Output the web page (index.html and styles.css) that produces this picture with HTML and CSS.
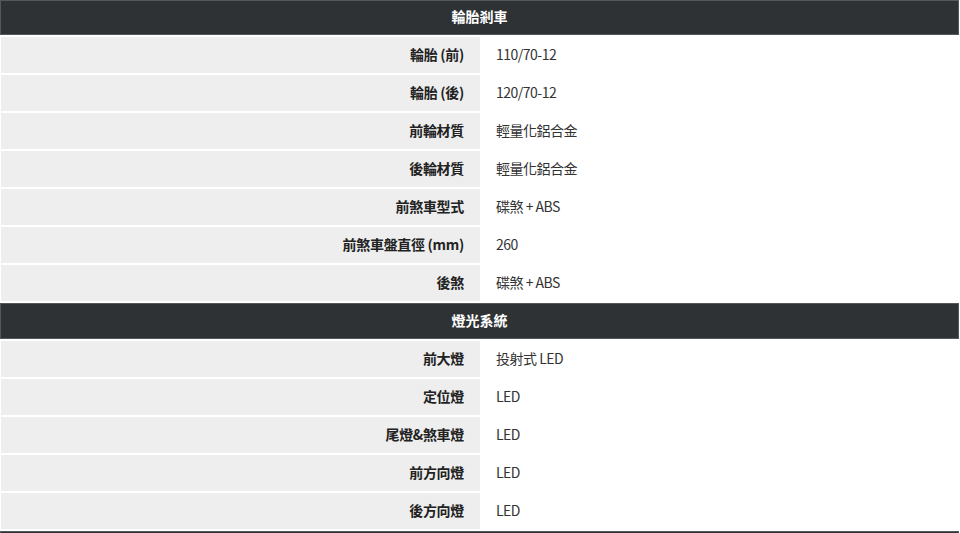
FILE: index.html
```html
<!DOCTYPE html>
<html lang="zh-Hant">
<head>
<meta charset="utf-8">
<title>規格</title>
<link rel="stylesheet" href="styles.css">
</head>
<body>
<div class="spec">
  <div class="head first">輪胎剎車</div>
  <div class="row"><div class="label">輪胎 (前)</div><div class="value">110/70-12</div></div>
  <div class="row"><div class="label">輪胎 (後)</div><div class="value">120/70-12</div></div>
  <div class="row"><div class="label">前輪材質</div><div class="value">輕量化鋁合金</div></div>
  <div class="row"><div class="label">後輪材質</div><div class="value">輕量化鋁合金</div></div>
  <div class="row"><div class="label">前煞車型式</div><div class="value">碟煞 + ABS</div></div>
  <div class="row"><div class="label">前煞車盤直徑 (mm)</div><div class="value">260</div></div>
  <div class="row"><div class="label">後煞</div><div class="value">碟煞 + ABS</div></div>
  <div class="head">燈光系統</div>
  <div class="row"><div class="label">前大燈</div><div class="value">投射式 LED</div></div>
  <div class="row"><div class="label">定位燈</div><div class="value">LED</div></div>
  <div class="row"><div class="label">尾燈&amp;煞車燈</div><div class="value">LED</div></div>
  <div class="row"><div class="label">前方向燈</div><div class="value">LED</div></div>
  <div class="row"><div class="label">後方向燈</div><div class="value">LED</div></div>
  <div class="head"></div>
</div>
</body>
</html>
```

FILE: styles.css
```css
html, body {
  margin: 0;
  padding: 0;
  background: #ffffff;
}
body {
  font-family: "Noto Sans CJK TC", "Noto Sans", sans-serif;
  overflow: hidden;
}
.spec {
  display: flex;
  flex-direction: column;
  gap: 2px;
  width: 960px;
}
.head {
  height: 31px;
  padding-bottom: 3px;
  box-sizing: content-box;
  border: 1px solid #55585b;
  background: #2e3235;
  color: #ffffff;
  font-weight: 700;
  font-size: 14px;
  display: flex;
  align-items: center;
  justify-content: center;
  margin: 0 1px 0 0;
}
.head.first {
  height: 30px;
}
.row {
  display: flex;
  height: 36px;
}
.label {
  width: 463px;
  margin-left: 1px;
  background: #eeeeee;
  display: flex;
  align-items: center;
  justify-content: flex-end;
  padding-right: 16px;
  padding-bottom: 3px;
  font-weight: 700;
  font-size: 14px;
  letter-spacing: -0.3px;
  color: #222222;
}
.value {
  flex: 1;
  display: flex;
  align-items: center;
  padding-left: 16px;
  padding-bottom: 3px;
  font-size: 14px;
  letter-spacing: -0.5px;
  color: #333333;
}
```
